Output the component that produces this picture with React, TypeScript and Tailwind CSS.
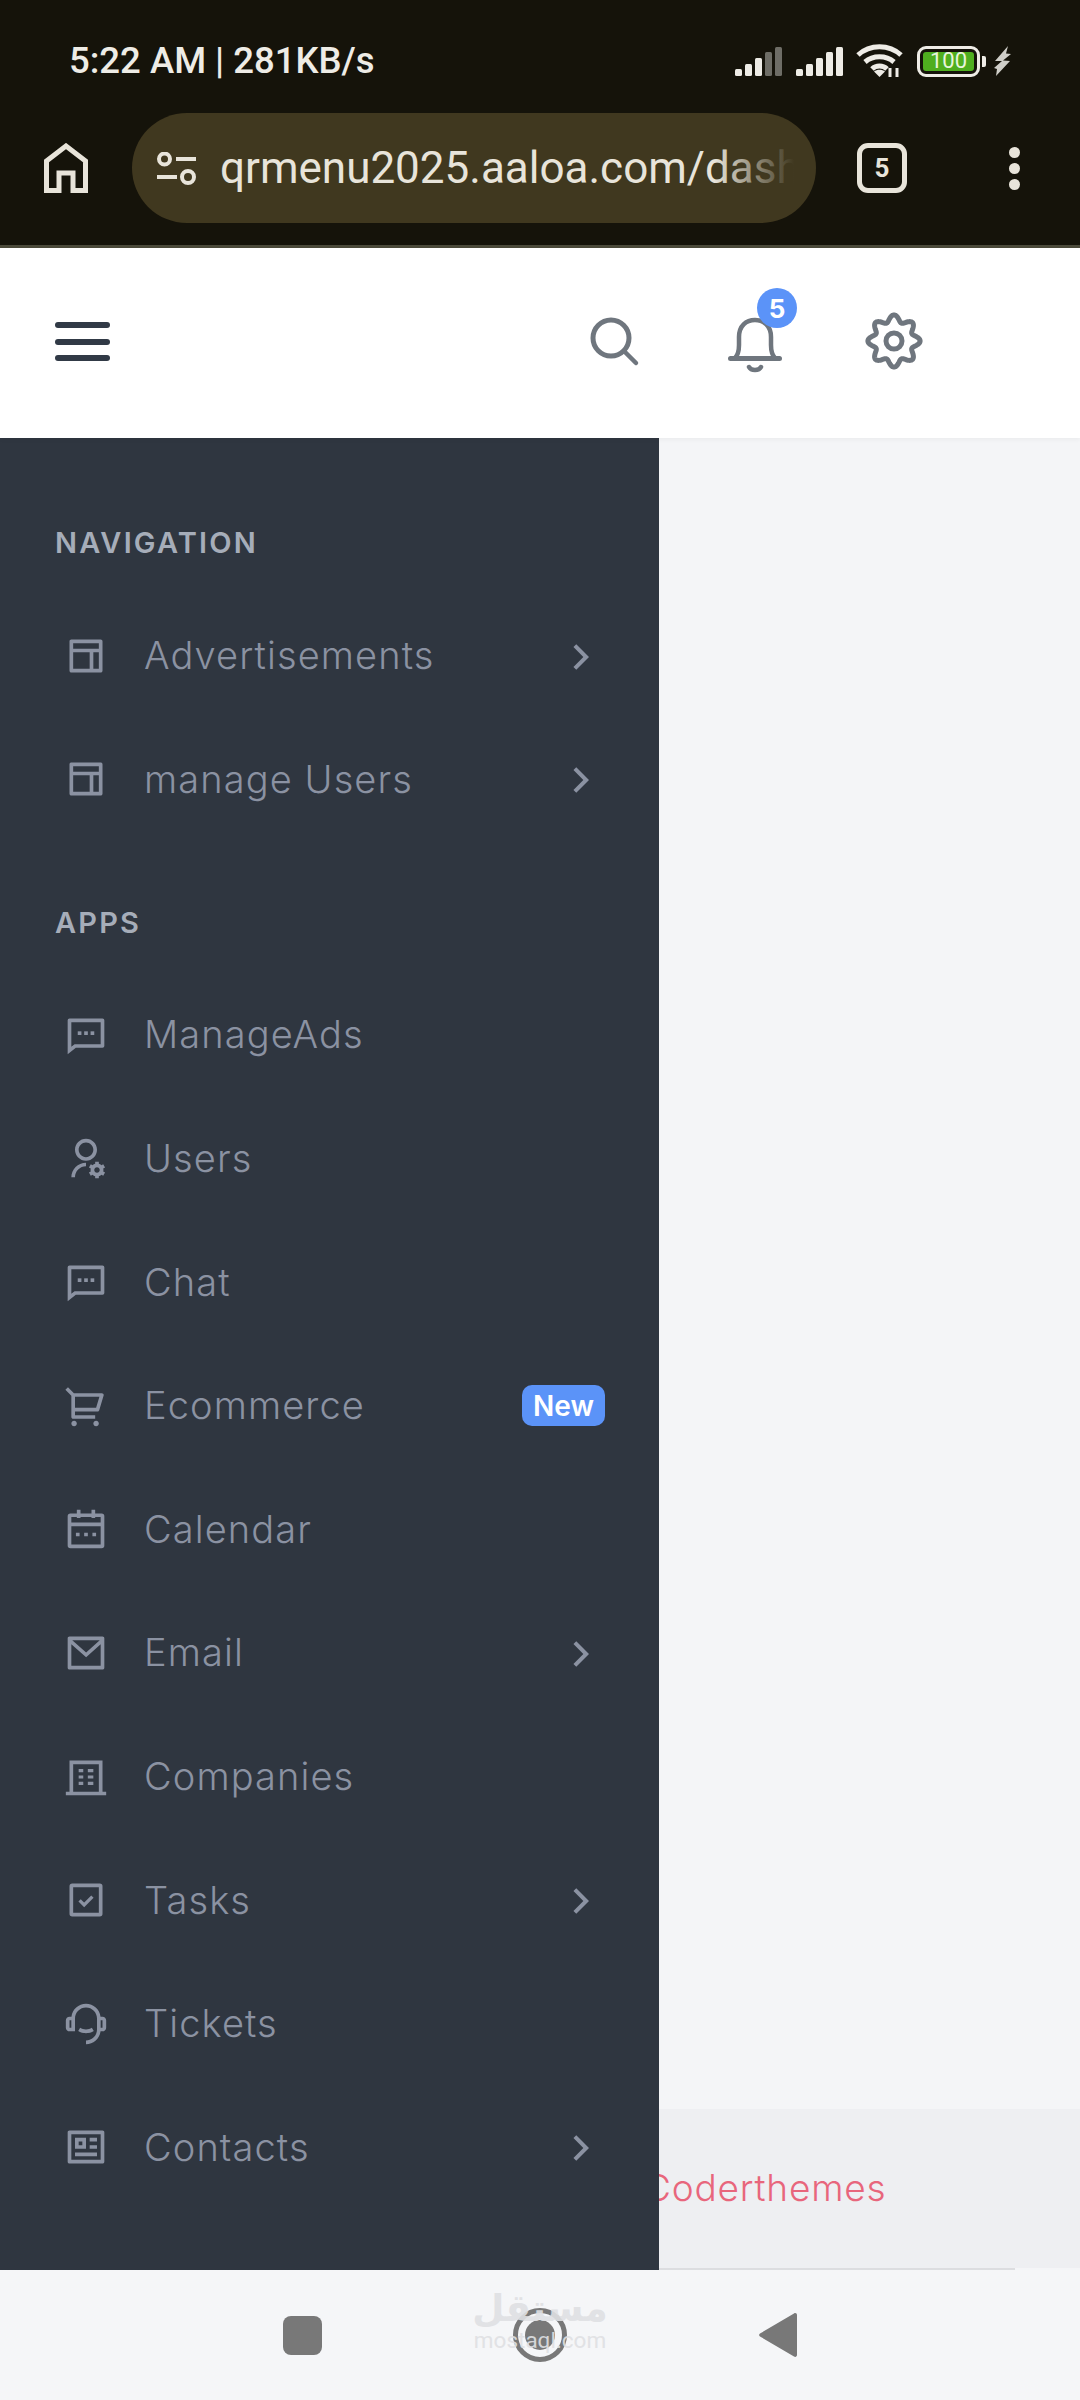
import React from "react";
import {
  RiLayoutLine, RiUserSettingsLine, RiShoppingCart2Line,
  RiMailLine, RiCustomerService2Line, RiProfileLine, RiArrowRightSLine,
} from "react-icons/ri";

type IconProps = { size?: number; className?: string };

function MessageDots({ size, className }: IconProps) {
  return (
    <svg width={size} height={size} viewBox="0 0 24 24" fill="currentColor" className={className}>
      <path d="M6.455 19L2 22.500V4a1 1 0 0 1 1-1h18a1 1 0 0 1 1 1v14a1 1 0 0 1-1 1H6.455zM4 18.385L5.763 17H20V5H4v13.385z" />
      <rect x="7.500" y="10" width="2" height="2" />
      <rect x="11" y="10" width="2" height="2" />
      <rect x="14.500" y="10" width="2" height="2" />
    </svg>
  );
}
function CalendarDots({ size, className }: IconProps) {
  return (
    <svg width={size} height={size} viewBox="0 0 24 24" fill="none" stroke="currentColor" strokeWidth="2" className={className}>
      <rect x="3" y="4.500" width="18" height="17" rx="0.500" />
      <path d="M3 9.500H21M8 1.500V6M16 1.500V6" />
      <path d="M6.500 15H8.500M11 15H13M15.500 15H17.500" />
    </svg>
  );
}
function BuildingDots({ size, className }: IconProps) {
  return (
    <svg width={size} height={size} viewBox="0 0 24 24" fill="none" stroke="currentColor" strokeWidth="2" className={className}>
      <path d="M4 21V4H20V21" />
      <path d="M1 21H23" />
      <g strokeWidth="1.700">
        <path d="M8 8.500H10.500M13 8.500H16M8 12H10.500M13 12H16M8 15.500H10.500M13 15.500H16" />
      </g>
    </svg>
  );
}
function CheckSquare({ size, className }: IconProps) {
  return (
    <svg width={size} height={size} viewBox="0 0 24 24" fill="none" stroke="currentColor" strokeWidth="2" className={className}>
      <rect x="4" y="4" width="16" height="16" rx="0.500" />
      <path d="M8.500 12.200L11 14.700L15.500 10.200" strokeWidth="1.800" />
    </svg>
  );
}

const gear = (() => {
  const pts: string[] = [];
  for (let i = 0; i < 240; i++) {
    const t = (i / 240) * Math.PI * 2;
    const r = 22.7 + 3.4 * Math.cos(8 * t);
    pts.push(`${(30 + r * Math.sin(t)).toFixed(2)},${(30 - r * Math.cos(t)).toFixed(2)}`);
  }
  return pts.join(" ");
})();

function Signal({ grey }: { grey: number }) {
  const bars = [7, 12, 18, 24, 29];
  return (
    <svg width="48" height="30" viewBox="0 0 48 30">
      {bars.map((h, i) => (
        <rect key={i} x={i * 10} y={30 - h} width="7" height={h} rx="1.500" fill={i >= 5 - grey ? "#6e6d66" : "#eeece6"} />
      ))}
    </svg>
  );
}

function Row({ icon: Icon, label, arrow, badge }: { icon: React.ComponentType<IconProps>; label: string; arrow?: boolean; badge?: string }) {
  return (
    <div className="flex h-[123.6px] items-center pl-[64px] pr-[54px]">
      <Icon size={44} className="shrink-0 text-[#8b92a2]" />
      <span className="ml-[36px] font-['Inter',sans-serif] text-[38px] font-light tracking-[1.1px] text-[#8b92a2]">{label}</span>
      {arrow && <RiArrowRightSLine size={48} className="ml-auto mt-[2px] text-[#8b92a2]" />}
      {badge && (
        <span className="ml-auto flex h-[41px] w-[83px] items-center justify-center rounded-[10px] bg-[#5b93f8] font-['Inter',sans-serif] text-[28px] font-semibold text-white">{badge}</span>
      )}
    </div>
  );
}

function SectionLabel({ children }: { children: React.ReactNode }) {
  return <div className="flex h-[40px] items-center pl-[55px] font-['Inter',sans-serif] text-[29px] font-semibold tracking-[2.2px] text-[#a6adb9]">{children}</div>;
}

export default function App() {
  return (
    <div className="flex h-[2400px] w-[1080px] flex-col overflow-hidden bg-[#f4f5f7]">
      {/* Browser chrome */}
      <div className="h-[248px] shrink-0 border-b-[3px] border-[#4b4a3a] bg-[#15130a]">
        <div className="flex h-[113px] items-start">
          <span className="ml-[69px] mt-[38px] font-['Roboto',sans-serif] text-[36.500px] font-medium leading-[46px] text-[#eeece6]">5:22 AM | 281KB/s</span>
          <div className="ml-auto mr-[68px] mt-[44px] flex items-center">
            <Signal grey={2} />
            <div className="ml-[13px]"><Signal grey={0} /></div>
            <svg className="ml-[12px]" width="47" height="34" viewBox="0 0 47 34" fill="none" stroke="#eeece6" strokeWidth="5">
              <path d="M2 11C14 0 33 0 45 11" />
              <path d="M9 18C17 11 30 11 38 18" />
              <path d="M16 25C20 21 27 21 31 25" />
              <path d="M23.500 33L18 27.500C21 25 26 25 29 27.500Z" fill="#eeece6" stroke="none" />
              <path d="M34 24V33M41 24V33" stroke="#eeece6" strokeWidth="3" />
            </svg>
            <div className="ml-[14px] flex h-[31px] w-[63px] items-center justify-center rounded-[9px] border-[3px] border-[#eeece6] p-[3px]">
              <span className="flex h-full w-full items-center justify-center rounded-[3px] bg-[#4fae1f] font-['Roboto',sans-serif] text-[22px] leading-none text-[#e8f5dc]">100</span>
            </div>
            <div className="ml-[2px] h-[11px] w-[4px] rounded-r-[2px] bg-[#eeece6]" />
            <svg className="ml-[8px]" width="18" height="30" viewBox="0 0 18 30">
              <path d="M14 0L1 15L8 15L0 22L3 23L2 30L16 15L9 14.500L17 8L12 7.500Z" fill="#cfcec8" />
            </svg>
          </div>
        </div>
        <div className="flex h-[110px] items-center">
          <svg className="ml-[44px]" width="44" height="50" viewBox="0 0 44 50" fill="none" stroke="#e8e4da" strokeWidth="5">
            <path d="M2.500 47.500V18L22 3L41.500 18V47.500H29V30H15V47.500Z" />
          </svg>
          <div className="ml-[44px] flex h-[110px] w-[684px] items-center overflow-hidden rounded-full bg-[#40381f]">
            <svg className="ml-[24px] shrink-0" width="41" height="33" viewBox="0 0 41 33" fill="none" stroke="#e8e4da" strokeWidth="4">
              <circle cx="8.500" cy="7" r="5.500" />
              <path d="M20 7H40M1 25H21" />
              <circle cx="32" cy="25" r="6" />
            </svg>
            <div className="relative ml-[23px] w-[574px] overflow-hidden whitespace-nowrap font-['Roboto',sans-serif] text-[44px] leading-[52px] text-[#e8e4da]">
              qrmenu2025.aaloa.com/dash
              <div className="absolute inset-y-0 right-0 w-[80px] bg-gradient-to-r from-transparent to-[#40381f]" />
            </div>
          </div>
          <div className="ml-[41px] flex h-[50px] w-[50px] items-center justify-center rounded-[11px] border-[5px] border-[#e8e4da] font-['Roboto',sans-serif] text-[26px] font-bold text-[#e8e4da]">5</div>
          <div className="ml-[102px] flex flex-col gap-[5px]">
            <span className="h-[11px] w-[11px] rounded-full bg-[#e8e4da]" />
            <span className="h-[11px] w-[11px] rounded-full bg-[#e8e4da]" />
            <span className="h-[11px] w-[11px] rounded-full bg-[#e8e4da]" />
          </div>
        </div>
      </div>

      {/* App header */}
      <div className="z-10 flex h-[190px] shrink-0 items-center bg-white shadow-[0_2px_4px_rgba(0,0,0,0.04)]">
        <div className="ml-[55px] mt-[-3px] flex w-[55px] flex-col gap-[10.500px]">
          <span className="h-[6px] rounded-full bg-[#313a46]" />
          <span className="h-[6px] rounded-full bg-[#313a46]" />
          <span className="h-[6px] rounded-full bg-[#313a46]" />
        </div>
        <svg className="ml-[480px] mt-[-3px]" width="50" height="50" viewBox="0 0 50 50" fill="none" stroke="#6f767e" strokeWidth="5" strokeLinecap="round">
          <circle cx="21" cy="21" r="18" />
          <path d="M34 34L46 46" strokeWidth="4.500" />
        </svg>
        <div className="relative ml-[88px] mt-[8px] h-[60px] w-[54px]">
          <svg width="54" height="60" viewBox="0 0 54 60" fill="none" stroke="#6f767e" strokeWidth="4.500" strokeLinecap="round">
            <path d="M2.500 41.500H51.500" strokeWidth="5" />
            <path d="M7 41C10 38 11 34 11 28V20C11 9 18 3 27 3C36 3 43 9 43 20V28C43 34 44 38 47 41" />
            <path d="M21 50C23 54 31 54 33 50" />
          </svg>
          <span className="absolute left-[29px] top-[-29px] flex h-[40px] w-[40px] items-center justify-center rounded-full bg-[#5b93f8] font-['Inter',sans-serif] text-[26px] font-bold text-white">5</span>
        </div>
        <svg className="ml-[82px] mt-[-4px]" width="60" height="60" viewBox="0 0 60 60" fill="none" stroke="#6f767e" strokeWidth="5" strokeLinejoin="round">
          <polygon points={gear} />
          <circle cx="30" cy="30" r="8" />
        </svg>
      </div>

      {/* Sidebar + content */}
      <div className="flex min-h-0 flex-1">
        <aside className="w-[659px] shrink-0 overflow-hidden bg-[#2f3640] pt-[85px]">
          <SectionLabel>NAVIGATION</SectionLabel>
          <div className="mt-[31px]">
            <Row icon={RiLayoutLine} label="Advertisements" arrow />
            <Row icon={RiLayoutLine} label="manage Users" arrow />
          </div>
          <div className="mt-[62px]">
            <SectionLabel>APPS</SectionLabel>
          </div>
          <div className="mt-[30px]">
            <Row icon={MessageDots} label="ManageAds" />
            <Row icon={RiUserSettingsLine} label="Users" />
            <Row icon={MessageDots} label="Chat" />
            <Row icon={RiShoppingCart2Line} label="Ecommerce" badge="New" />
            <Row icon={CalendarDots} label="Calendar" />
            <Row icon={RiMailLine} label="Email" arrow />
            <Row icon={BuildingDots} label="Companies" />
            <Row icon={CheckSquare} label="Tasks" arrow />
            <Row icon={RiCustomerService2Line} label="Tickets" />
            <Row icon={RiProfileLine} label="Contacts" arrow />
          </div>
        </aside>
        <main className="flex min-w-0 flex-1 flex-col justify-end overflow-hidden">
          <div className="flex h-[159px] items-center bg-[#eeeff2]">
            <span className="ml-[-15px] mt-[-2px] font-['Inter',sans-serif] text-[37px] font-light tracking-[0.8px] text-[#e8667c]">Coderthemes</span>
          </div>
          <div className="h-[2px] w-[356px] bg-[#dcdde0]" />
        </main>
      </div>

      {/* Android nav bar */}
      <div className="relative flex h-[130px] shrink-0 items-center bg-[#f5f6f8]">
        <div className="ml-[283px] h-[39px] w-[39px] rounded-[8px] bg-[#787878]" />
        <div className="ml-[191px] flex h-[54px] w-[54px] items-center justify-center rounded-full border-[5px] border-[#787878]">
          <span className="h-[30px] w-[30px] rounded-full bg-[#787878]" />
        </div>
        <svg className="ml-[191px]" width="40" height="46" viewBox="0 0 40 46">
          <path d="M36 1.500C37.500 0.500 39 1.500 39 3V43C39 44.500 37.500 45.500 36 44.500L2 24.500C0.800 23.800 0.800 22.200 2 21.500Z" fill="#787878" />
        </svg>
        <div className="pointer-events-none absolute left-[474px] top-[18px] flex w-[132px] flex-col items-center text-[#dfe0e3] opacity-90">
          <span className="font-['DejaVu_Sans',sans-serif] text-[37px] font-bold leading-[42px]">مستقل</span>
          <span className="font-['Roboto',sans-serif] text-[22.500px] leading-[20px]">mostaql.com</span>
        </div>
      </div>
    </div>
  );
}
